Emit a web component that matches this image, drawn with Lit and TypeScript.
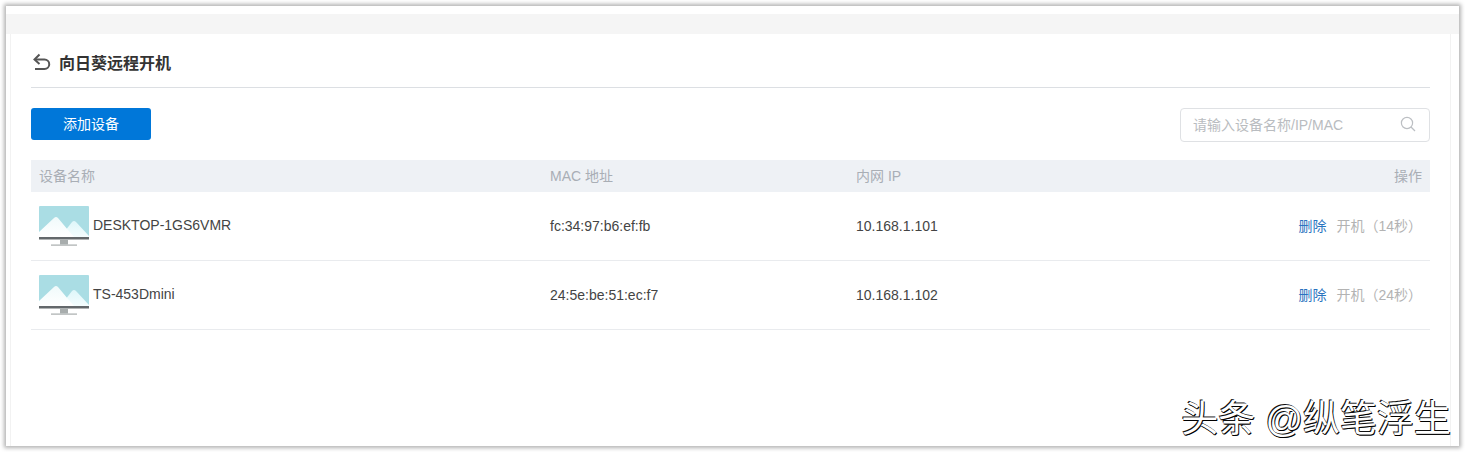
import { LitElement, html, css, svg } from 'lit';
import { customElement } from 'lit/decorators.js';

interface Device {
  name: string;
  mac: string;
  ip: string;
  wait: number;
}

const DEVICES: Device[] = [
  { name: 'DESKTOP-1GS6VMR', mac: 'fc:34:97:b6:ef:fb', ip: '10.168.1.101', wait: 14 },
  { name: 'TS-453Dmini', mac: '24:5e:be:51:ec:f7', ip: '10.168.1.102', wait: 24 },
];

// monitor picture used in each device row
const monitorIcon = svg`
  <svg class="monitor" width="50" height="40" viewBox="0 0 50 40">
    <defs>
      <linearGradient id="snow" x1="0" y1="0" x2="0" y2="1">
        <stop offset="0" stop-color="#f0fafb" />
        <stop offset="1" stop-color="#ffffff" />
      </linearGradient>
      <linearGradient id="snow2" x1="0" y1="0" x2="0" y2="1">
        <stop offset="0" stop-color="#def6f9" />
        <stop offset="1" stop-color="#f4fdfe" />
      </linearGradient>
    </defs>
    <path d="M1 0h48a1 1 0 0 1 1 1v30H0V1a1 1 0 0 1 1-1z" fill="#aadde4" />
    <path d="M26 25 L33 16 Q35 14 37 16 L50 30 V31 H26 z" fill="url(#snow2)" />
    <path d="M0 26 L15 12 Q17 10 19 12 L29 24 L35 31 H0 z" fill="url(#snow)" />
    <rect x="0" y="31" width="50" height="2.5" fill="#63686b" />
    <rect x="21" y="33.5" width="8" height="5" fill="#a8adad" />
    <rect x="12" y="38.5" width="26" height="1.2" fill="#a8adad" />
  </svg>
`;

@customElement('app-root')
export class AppRoot extends LitElement {
  static styles = css`
    :host {
      display: block;
      height: 452px;
      padding: 6px;
      box-sizing: border-box;
      background: #fff;
      font-family: "Liberation Sans", Arial, "Noto Sans CJK SC", sans-serif;
      overflow: hidden;
    }

    .window {
      position: relative;
      height: 440px;
      padding: 8px 9px 0 5px;
      box-sizing: border-box;
      background: #fff;
      box-shadow: 0 0 4px 2px rgba(0, 0, 0, 0.3);
    }

    .band {
      height: 20px;
      margin: 0 -9px 0 -5px;
      background: #f5f5f5;
    }

    .card {
      height: 412px;
      padding: 0 20px;
      background: #fff;
      box-shadow: -1px 0 0 #f2f2f2, 1px 0 0 #f2f2f2;
    }

    .head {
      display: flex;
      align-items: center;
      gap: 7px;
      height: 54px;
      padding-top: 3px;
      box-sizing: border-box;
      border-bottom: 1px solid #dcdfe3;
      font-size: 16px;
      font-weight: 700;
      color: #333;
    }

    .head svg {
      display: block;
    }

    .toolbar {
      display: flex;
      justify-content: space-between;
      align-items: flex-start;
      padding-top: 20px;
      height: 52px;
    }

    .add {
      width: 120px;
      height: 32px;
      padding: 0 0 2px;
      border: 0;
      border-radius: 3px;
      background: #0077d9;
      color: #fff;
      font-family: inherit;
      font-size: 14px;
    }

    .search {
      display: flex;
      align-items: center;
      justify-content: space-between;
      width: 250px;
      height: 34px;
      padding: 0 13px 2px 12px;
      box-sizing: border-box;
      border: 1px solid #dfe1e4;
      border-radius: 4px;
      font-size: 14px;
      color: #b9bcc0;
    }

    .row {
      display: grid;
      grid-template-columns: 511px 306px 1fr auto;
      align-items: center;
      padding: 0 8px;
    }

    .thead {
      height: 32px;
      padding-bottom: 2px;
      box-sizing: border-box;
      background: #eef1f5;
      font-size: 14px;
      color: #a9aeb5;
    }

    .tbody {
      height: 69px;
      box-sizing: border-box;
      border-bottom: 1px solid #e9ebee;
      font-size: 14px;
      color: #444;
    }

    .name {
      display: flex;
      align-items: center;
      gap: 4px;
    }

    .name span {
      margin-top: -2px;
    }

    .monitor {
      display: block;
      margin-top: -1px;
    }

    .actions {
      display: flex;
      gap: 10px;
      margin-top: -3px;
    }

    .del {
      color: #2a74c0;
    }

    .boot {
      color: #b3b3b3;
    }

    /* toutiao watermark sits on top of the card */
    .mark {
      position: absolute;
      right: 8px;
      bottom: 4px;
      font-size: 37px;
      line-height: 44px;
      color: #fff;
      white-space: nowrap;
      text-shadow: -1px -1px 0 #111, 1px 1px 0 #000, 0 1px 0 #000;
    }
  `;

  render() {
    return html`
      <div class="window">
        <div class="band"></div>
        <div class="card">
          <div class="head">
            <svg width="21" height="20" viewBox="0 0 21 20" fill="none" stroke="#555" stroke-width="2">
              <path d="M4 7.5h9.5a4.6 4.6 0 0 1 0 9.5H4" />
              <path d="M8.5 2.5 3.5 7.5l5 4.5" />
            </svg>
            向日葵远程开机
          </div>
          <div class="toolbar">
            <button class="add">添加设备</button>
            <div class="search">
              <span>请输入设备名称/IP/MAC</span>
              <svg width="16" height="16" viewBox="0 0 16 16" fill="none" stroke="#bcbfc3" stroke-width="1.2">
                <circle cx="7" cy="7" r="5.6" />
                <path d="M11 11l4 4" />
              </svg>
            </div>
          </div>
          <div class="row thead">
            <span>设备名称</span>
            <span>MAC 地址</span>
            <span>内网 IP</span>
            <span>操作</span>
          </div>
          ${DEVICES.map(
            (d) => html`
              <div class="row tbody">
                <div class="name">${monitorIcon}<span>${d.name}</span></div>
                <span>${d.mac}</span>
                <span>${d.ip}</span>
                <div class="actions">
                  <span class="del">删除</span>
                  <span class="boot">开机（${d.wait}秒）</span>
                </div>
              </div>
            `
          )}
        </div>
        <div class="mark">头条 @纵笔浮生</div>
      </div>
    `;
  }
}
